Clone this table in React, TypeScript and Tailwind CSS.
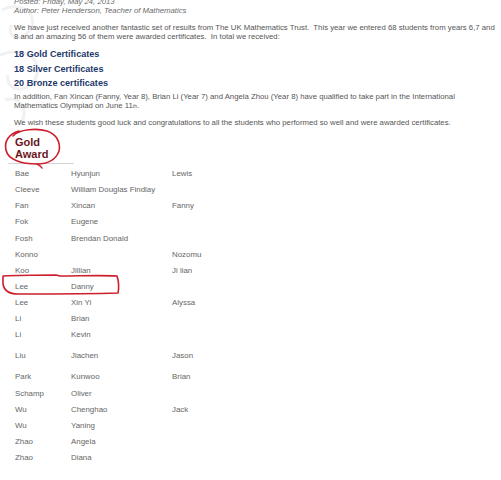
import React from "react";

const rows: { s: string; f: string; p: string; h?: string }[] = [
  { s: "Bae", f: "Hyunjun", p: "Lewis" },
  { s: "Cleeve", f: "William Douglas Findlay", p: "" },
  { s: "Fan", f: "Xincan", p: "Fanny" },
  { s: "Fok", f: "Eugene", p: "" },
  { s: "Fosh", f: "Brendan Donald", p: "" },
  { s: "Konno", f: "", p: "Nozomu" },
  { s: "Koo", f: "Jillian", p: "Ji lian" },
  { s: "Lee", f: "Danny", p: "" },
  { s: "Lee", f: "Xin Yi", p: "Alyssa" },
  { s: "Li", f: "Brian", p: "" },
  { s: "Li", f: "Kevin", p: "" },
  { s: "Liu", f: "Jiachen", p: "Jason", h: "tall" },
  { s: "Park", f: "Kunwoo", p: "Brian" },
  { s: "Schamp", f: "Oliver", p: "" },
  { s: "Wu", f: "Chenghao", p: "Jack" },
  { s: "Wu", f: "Yaning", p: "" },
  { s: "Zhao", f: "Angela", p: "" },
  { s: "Zhao", f: "Diana", p: "" },
];

export default function App() {
  return (
    <div
      className="relative w-[501px] h-[480px] overflow-hidden bg-white"
      style={{ fontFamily: '"Liberation Sans", Arial, sans-serif' }}
    >
      {/* faint watermark */}
      <svg className="absolute left-0 top-0" width="60" height="130" viewBox="0 0 60 130">
        <g fill="none" stroke="#f1f1f1" strokeWidth="3">
          <path d="M2 10 C 20 0, 40 15, 30 30 C 20 45, 5 35, 12 25" />
          <path d="M0 55 C 25 45, 45 60, 35 80 C 25 95, 5 90, 8 75" />
          <path d="M5 100 C 20 95, 30 110, 20 125" />
        </g>
      </svg>

      <div className="relative pl-[14px]">
        <div className="mt-[-2px] text-[7.76px] leading-[8.5px] italic text-[#6a6a6a]">
          <div>Posted: Friday, May 24, 2013</div>
          <div>Author: Peter Henderson, Teacher of Mathematics</div>
        </div>

        <div className="mt-[8px] text-[7.76px] leading-[9px] text-[#555] whitespace-pre">
          <div>We have just received another fantastic set of results from The UK Mathematics Trust.  This year we entered 68 students from years 6,7 and</div>
          <div>8 and an amazing 56 of them were awarded certificates.  In total we received:</div>
        </div>

        <div className="mt-[6px] text-[9.1px] leading-[14.5px] font-bold text-[#24386a]">
          <div>18 Gold Certificates</div>
          <div>18 Silver Certificates</div>
          <div>20 Bronze certificates</div>
        </div>

        <div className="mt-[1.5px] text-[7.76px] leading-[9.3px] text-[#555] whitespace-pre">
          <div>In addition, Fan Xincan (Fanny, Year 8), Brian Li (Year 7) and Angela Zhou (Year 8) have qualified to take part in the International</div>
          <div>
            Mathematics Olympiad on June 11<span className="text-[5px] align-baseline">th</span>.
          </div>
        </div>

        <div className="mt-[6.75px] text-[7.76px] leading-[9.3px] text-[#555] whitespace-pre">
          We wish these students good luck and congratulations to all the students who performed so well and were awarded certificates.
        </div>

        <div className="mt-[8.7px] pl-[1px] text-[11px] leading-[12px] font-bold text-[#6b1723]">
          <div>Gold</div>
          <div>Award</div>
        </div>
      </div>

      <div className="ml-[8px] mt-[3px] w-[66px] h-px bg-[#d6d6d6]" />

      <div className="mt-[1.6px] pl-[15px] text-[7.9px] text-[#666]">
        {rows.map((r, i) => (
          <div
            key={i}
            className={`grid grid-cols-[56px_101px_1fr] items-center ${r.h ? "h-[26px]" : "h-[16.13px]"}`}
          >
            <div>{r.s}</div>
            <div>{r.f}</div>
            <div>{r.p}</div>
          </div>
        ))}
      </div>

      {/* red annotations */}
      <svg className="absolute left-0 top-0 pointer-events-none" width="501" height="480" viewBox="0 0 501 480">
        <g fill="none" stroke="#cc1f2b" strokeWidth="1.6" strokeLinecap="round" strokeLinejoin="round">
          <path d="M13 136 C 19 129, 37 128, 47 131 C 56 134, 61 142, 59 151 C 56 160, 47 164, 37 164 C 22 164, 8 160, 6 150 C 4 141, 9 134, 19 131" />
          <path d="M37 164 C 39 165, 41 166, 42 168" />
          <path d="M3 276 C 20 275, 40 275, 56 275 L 60 276 C 80 276, 100 275, 117 276 C 119 282, 119 288, 118 293 C 90 294, 55 294, 18 294 C 9 294, 4 290, 3 284 L 3 277" />
        </g>
      </svg>
    </div>
  );
}
